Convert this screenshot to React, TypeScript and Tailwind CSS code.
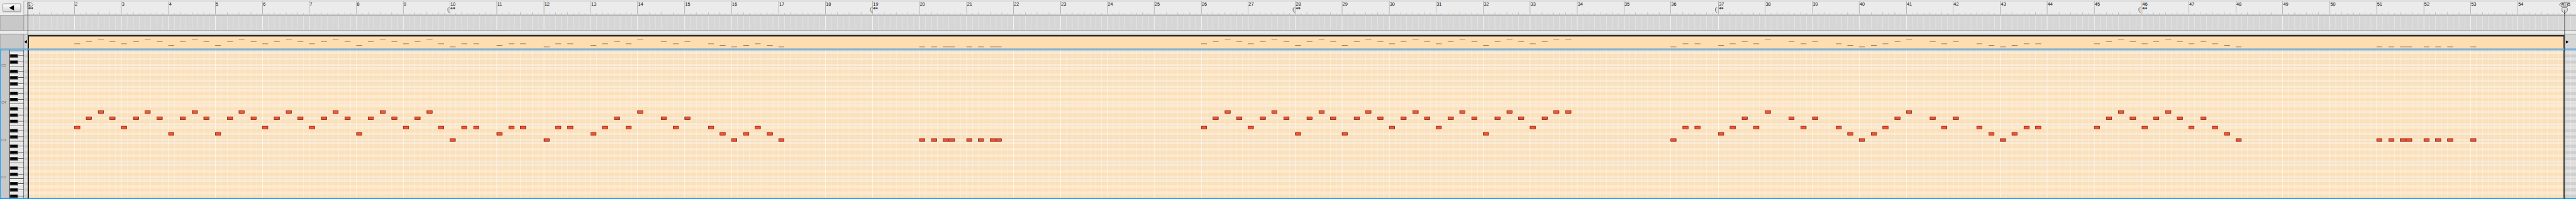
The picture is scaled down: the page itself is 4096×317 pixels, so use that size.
import type { ReactNode } from "react";

// Left pixel of every bar line, bars 1 to 55, with one extrapolated bar at the end.
const BARS = [
  62, 167, 272, 378, 483, 589, 694, 800, 905, 1010, 1115, 1221, 1326, 1431, 1537, 1642, 1748, 1853,
  1959, 2064, 2170, 2275, 2381, 2486, 2591, 2697, 2802, 2908, 3013, 3119, 3224, 3330, 3435, 3541,
  3646, 3751, 3858, 3963, 4069, 4174, 4280, 4385, 4491, 4596, 4702, 4809, 4914, 5020, 5125, 5231,
  5336, 5442, 5547, 5653, 5758, 5864,
];

const ORIGIN = 53;
const WIDTH = 5784 - ORIGIN;

const eighth = (bar: number, step: number) => {
  if (step >= 8) return BARS[bar];
  const a = BARS[bar - 1];
  return Math.round(a + ((BARS[bar] - a) * step) / 8);
};

// One string per bar, one letter per eighth: a (highest) to e (lowest), "." for a rest.
const MELODY: Record<number, string> = {
  2: "c.b.a.b.", 3: "c.b.a.b.", 4: "d.b.a.b.", 5: "d.b.a.b.", 6: "c.b.a.b.", 7: "c.b.a.b.",
  8: "d.b.a.b.", 9: "c.b.a.c.", 10: "e.c.c...", 11: "d.c.c...", 12: "e.c.c...", 13: "d.c.b.c.",
  14: "a...b.c.", 15: "b...c.d.", 16: "e.d.c.d.", 17: "e.......", 20: "e.e.ee..", 21: "e.e.ee..",
  26: "c.b.a.b.", 27: "c.b.a.b.", 28: "d.b.a.b.", 29: "d.b.a.b.", 30: "c.b.a.b.", 31: "c.b.a.b.",
  32: "d.b.a.b.", 33: "c.b.a.a.", 36: "e.c.c...", 37: "d.c.b.c.", 38: "a...b.c.", 39: "b...c.d.",
  40: "e.d.c.b.", 41: "a...b.c.", 42: "b...c.d.", 43: "e.d.c.c.", 45: "c.b.a.b.", 46: "c.b.a.b.",
  47: "c.b.c.d.", 48: "e.......", 51: "e.e.ee..", 52: "e.e.e...", 53: "e.......",
};
const ROLL_Y: Record<string, number> = { a: 248, b: 262, c: 283, d: 297, e: 311 };
const MINI_Y: Record<string, number> = { a: 89, b: 93, c: 98, d: 102, e: 105 };

const NOTES = Object.entries(MELODY).flatMap(([bar, steps]) =>
  steps.split("").flatMap((pitch, i) => {
    if (pitch === ".") return [];
    const x = eighth(+bar, i);
    return [{ x, w: eighth(+bar, i + 1) - x, pitch }];
  }),
);

const LINES = BARS.slice(0, 55).flatMap((_, i) =>
  (i === 54 ? [0, 1] : [0, 1, 2, 3, 4, 5, 6, 7]).map((step) => ({ x: eighth(i + 1, step), step })),
);

const OCTAVES = [0, 84, 168, 252];
const BLACK_ROWS = OCTAVES.flatMap((o) => [122, 136, 157, 171, 185].map((y) => y + o));
const SPLITS = [114, ...OCTAVES.flatMap((o) => [149 + o, 198 + o])].filter((y) => y < 445);

function Canvas({ x = ORIGIN, y, w = WIDTH, h, children }: { x?: number; y: number; w?: number; h: number; children: ReactNode }) {
  return (
    <svg className="block shrink-0 overflow-visible" width={w} height={h} viewBox={`${x} ${y} ${w} ${h}`}>
      {children}
    </svg>
  );
}

function GridLines({ y, h, bar, minor }: { y: number; h: number; bar: string; minor: string }) {
  return (
    <>
      {LINES.map((l) => (
        <rect key={l.x} x={l.x} y={y} width={1} height={h} fill={l.step === 0 ? bar : minor} />
      ))}
    </>
  );
}

function Ruler() {
  return (
    <div className="relative">
      <Canvas y={0} h={34}>
        <rect x={53} y={2} width={WIDTH} height={1} fill="#a0a0a0" />
        <rect x={53} y={2} width={1} height={31} fill="#a0a0a0" />
        <rect x={53} y={32} width={WIDTH} height={1} fill="#a0a0a0" />
        {LINES.map((l) => {
          const top = l.step === 0 ? 3 : l.step % 2 === 0 ? 28 : 30;
          return <rect key={l.x} x={l.x} y={top} width={1} height={32 - top} fill="#a0a0a0" />;
        })}
        {[10, 19, 28, 37, 46].map((b) => {
          const x = BARS[b - 1] - (b > 28 ? 2 : 0);
          return (
            <path key={b} d={`M${x} 17.5H${x - 2.5}L${x - 4.5} 18.5V24.5L${x - 0.5} 29.5`} fill="#dcdcdc" stroke="#4a4a4a" />
          );
        })}
      </Canvas>
      {BARS.slice(1, 55).map((x, i) => (
        <span
          key={x}
          className="absolute top-[4px] text-[10.3px] leading-[11px] text-black"
          style={{ left: x - ORIGIN + (i === 53 ? 2 : 1.5) }}
        >
          {i + 2}
        </span>
      ))}
      {[1, 10, 19, 28, 37, 46].map((b) => (
        <span
          key={b}
          className="absolute top-[15px] text-[8px] leading-[8px] tracking-[-0.4px] text-black"
          style={{ left: BARS[b - 1] - ORIGIN + 1.5 }}
        >
          4/4
        </span>
      ))}
    </div>
  );
}

function Overlay() {
  return (
    <div className="pointer-events-none absolute inset-0">
      <svg className="absolute left-0 top-0 overflow-visible" width={5784} height={447} viewBox="0 0 5784 447">
        <rect x={0} y={110.9} width={5784} height={2.2} fill="#0099ff" />
        <rect x={0} y={444.9} width={5784} height={2.3} fill="#0099ff" />
        <rect x={0} y={111} width={1.2} height={336} fill="#0099ff" />
        <path d="M62.5 5.5H69.5L74.5 10.5L69.5 15.5H62.5Z" fill="#ebebeb" stroke="#555" />
        <rect x={62} y={5} width={1} height={442} fill="#000" />
        <path d="M5764.5 5.5H5751.5L5746.5 10.5L5751.5 15.5H5764.5Z" fill="#dedede" stroke="#555" />
        <path d="M5759.5 7V14" stroke="#333" strokeWidth={1.2} />
        <path d="M5753.5 17.5H5763L5764.5 19V25L5758.5 31L5752.5 25V18.5Z" fill="#e0e0e0" stroke="#4a4a4a" />
        <rect x={5758} y={22} width={1} height={425} fill="#000" />
        <path d="M54 94L58.5 90H61V98H58.5Z" fill="#000" stroke="#fff" />
        <path d="M5760.5 90.5H5763L5768.5 94L5763 97.5H5760.5Z" fill="#000" stroke="#fff" />
      </svg>
      <span className="absolute left-[64px] top-[5px] text-[9px] leading-[11px]">L</span>
      <span className="absolute left-[5751px] top-[5px] text-[8.5px] leading-[11px]">R</span>
    </div>
  );
}

function Keyboard() {
  return (
    <Canvas x={0} y={111} w={54} h={336}>
      <rect x={0} y={111} width={54} height={336} fill="#c8c8c8" />
      <rect x={21} y={111} width={33} height={336} fill="#e8e8e8" />
      {[...SPLITS, ...BLACK_ROWS.map((y) => y + 3)].map((y) => (
        <g key={y}>
          <rect x={22} y={y - 1} width={31} height={1} fill="#d2d2d2" />
          <rect x={22} y={y} width={31} height={1} fill="#000" />
          <rect x={22} y={y + 1} width={31} height={1} fill="#fff" />
        </g>
      ))}
      {BLACK_ROWS.map((y) => (
        <g key={y}>
          <rect x={22} y={y - 1} width={19} height={9} fill="#fafafa" />
          <rect x={22} y={y} width={19} height={8} fill="#9a9a9a" />
          <rect x={22} y={y} width={18} height={7} fill="#2b2b2b" />
          <rect x={24} y={y + 1} width={14} height={4} fill="#000" />
        </g>
      ))}
      <rect x={21} y={111} width={1} height={336} fill="#000" />
      <rect x={53} y={111} width={1} height={336} fill="#000" />
    </Canvas>
  );
}

function PianoRoll() {
  return (
    <Canvas x={54} y={111} w={5730} h={336}>
      <rect x={54} y={111} width={5730} height={336} fill="#e1e1e1" />
      <rect x={63} y={111} width={5695} height={336} fill="#fcead0" />
      {BLACK_ROWS.map((y) => (
        <g key={y}>
          <rect x={54} y={y} width={5730} height={7} fill="#cfcfcf" />
          <rect x={63} y={y} width={5695} height={7} fill="#fde0b8" />
        </g>
      ))}
      {SPLITS.map((y) => (
        <g key={y}>
          <rect x={54} y={y} width={5730} height={1} fill="#cfcfcf" />
          <rect x={63} y={y} width={5695} height={1} fill="#fde0b8" />
        </g>
      ))}
      <GridLines y={111} h={336} bar="rgba(255,255,255,0.85)" minor="rgba(255,255,255,0.45)" />
      <rect x={63} y={111} width={2} height={336} fill="#222" />
      <rect x={5756} y={111} width={2} height={336} fill="#222" />
      {NOTES.map((n) => (
        <rect key={n.x} x={n.x + 0.5} y={ROLL_Y[n.pitch] + 0.5} width={n.w - 1} height={6} fill="#ff5030" stroke="#6a140a" />
      ))}
    </Canvas>
  );
}

export default function App() {
  return (
    <div className="h-[317px] w-[4096px] overflow-hidden bg-[#ebebeb]">
      <div className="relative flex h-[447px] w-[5784px] origin-top-left scale-x-[0.70816] scale-y-[0.70917] flex-col bg-[#ebebeb] font-['Liberation_Sans',Arial,sans-serif]">
        <header className="flex h-[34px] shrink-0">
          <div className="w-[53px] pl-[6px] pt-[8px]">
            <button className="flex h-[19px] w-[41px] items-center justify-center rounded-[2px] border border-[#777] bg-linear-to-b from-white to-[#d4d4d4] pr-[1px]">
              <svg className="block" width={12} height={13} viewBox="0 0 12 13">
                <path d="M0.5 6.5L11.5 0.5V12.5Z" fill="#000" />
              </svg>
            </button>
          </div>
          <Ruler />
        </header>

        <section className="flex h-[35px] shrink-0">
          <Canvas x={0} y={34} w={5784} h={35}>
            <rect x={0} y={34} width={5784} height={35} fill="#d6d6d6" />
            <rect x={0} y={34} width={53} height={35} fill="#c8c8c8" />
            <GridLines y={35} h={33} bar="#fff" minor="#e9e9e9" />
            <rect x={0} y={34} width={5784} height={1} fill="#a0a0a0" />
            <rect x={0} y={68} width={5784} height={1} fill="#a0a0a0" />
            <rect x={0} y={34} width={1} height={35} fill="#a0a0a0" />
            <rect x={53} y={34} width={1} height={35} fill="#808080" />
          </Canvas>
        </section>

        <section className="mt-[7px] flex h-[35px] shrink-0">
          <Canvas x={0} y={76} w={5784} h={35}>
            <rect x={0} y={76} width={5784} height={34} fill="#d6d6d6" />
            <rect x={0} y={76} width={53} height={34} fill="#c8c8c8" />
            <GridLines y={77} h={2} bar="#fff" minor="#e9e9e9" />
            <rect x={63} y={79} width={5695} height={31} fill="#222" />
            <rect x={65} y={82} width={5691} height={28} fill="#fedeb1" />
            {NOTES.map((n) => (
              <rect key={n.x} x={n.x} y={MINI_Y[n.pitch]} width={n.w} height={1} fill="#6b5a48" />
            ))}
            <rect x={0} y={76} width={5784} height={1} fill="#a0a0a0" />
            <rect x={0} y={109} width={5784} height={1} fill="#a0a0a0" />
            <rect x={0} y={110} width={5784} height={1} fill="#ebebeb" />
            <rect x={0} y={76} width={1} height={34} fill="#a0a0a0" />
            <rect x={53} y={76} width={1} height={34} fill="#808080" />
          </Canvas>
        </section>

        <main className="relative flex h-[336px] shrink-0">
          <Keyboard />
          <PianoRoll />
          {[5, 4, 3, 2].map((octave, i) => (
            <span
              key={octave}
              className="absolute left-[3px] text-[8px] leading-[10px] text-[#6e6e6e]"
              style={{ top: 31 + i * 84 }}
            >
              C{octave}
            </span>
          ))}
        </main>

        <Overlay />
      </div>
    </div>
  );
}
